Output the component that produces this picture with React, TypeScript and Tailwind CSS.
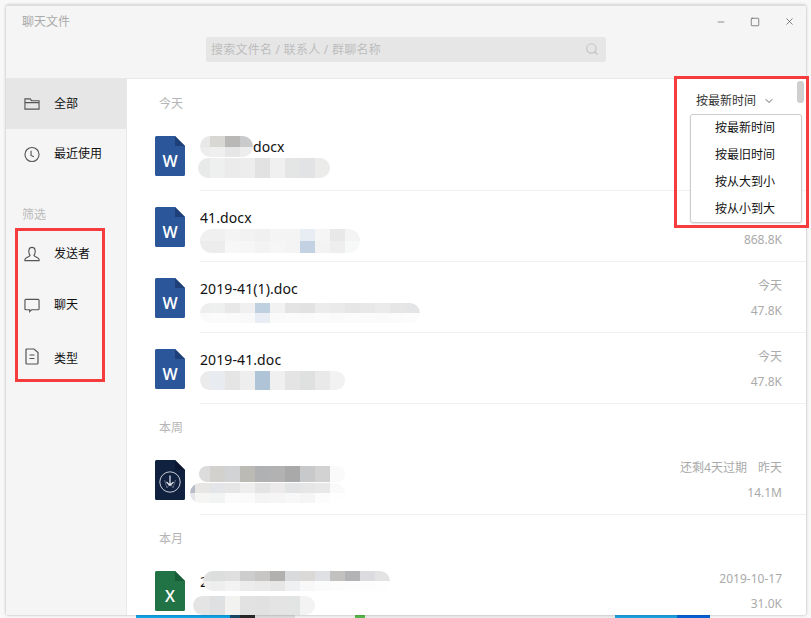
import React from "react";
import { Search, ChevronDown, Minus, Square, X } from "lucide-react";

type Cells = string[][];

// pixelated redaction smear over file names: 15px mosaic, first column is cut by the smear's edge
const Blur = ({ rows, lead, className }: { rows: Cells; lead: number; className: string }) => (
  <div className={`overflow-hidden rounded-full flex flex-col ${className}`}>
    {rows.map((row, i) => (
      <div key={i} className="flex flex-1">
        {row.map((color, j) => (
          <div key={j} className="shrink-0" style={{ backgroundColor: color, width: j === 0 ? lead : 15 }} />
        ))}
      </div>
    ))}
  </div>
);

const DocIcon = ({ body, fold, letter }: { body: string; fold: string; letter: string }) => (
  <svg width="30" height="40" viewBox="0 0 30 40" className="shrink-0 mt-4">
    <path d="M1.5 0H20L30 10V38.5A1.5 1.5 0 0 1 28.5 40H1.5A1.5 1.5 0 0 1 0 38.5V1.5A1.5 1.5 0 0 1 1.5 0Z" fill={body} />
    <path d="M20 0L30 10H20Z" fill={fold} />
    <text x="15" y="31" textAnchor="middle" fontSize="16" fontWeight="600" fill="#fff" fontFamily="Open Sans, sans-serif">
      {letter}
    </text>
  </svg>
);

const DownloadIcon = () => (
  <svg width="30" height="40" viewBox="0 0 30 40" className="shrink-0 mt-4">
    <path d="M1.5 0H20L30 10V38.5A1.5 1.5 0 0 1 28.5 40H1.5A1.5 1.5 0 0 1 0 38.5V1.5A1.5 1.5 0 0 1 1.5 0Z" fill="#10203f" />
    <path d="M20 0L30 10H20Z" fill="#0b1730" />
    <circle cx="15" cy="22" r="10.2" fill="none" stroke="#c8ccd4" strokeWidth="1" />
    <path d="M9.5 20L12 28L15 23L18 28L20.5 20" fill="none" stroke="#5d667c" strokeWidth="1" />
    <path d="M15 15.5V25M11.5 22L15 25.5L18.5 22" fill="none" stroke="#e8eaee" strokeWidth="1.2" />
  </svg>
);

const Row = ({
  icon,
  name,
  sub,
  date,
  size,
}: {
  icon: React.ReactNode;
  name: React.ReactNode;
  sub: React.ReactNode;
  date?: React.ReactNode;
  size?: string;
}) => (
  <div className="flex pl-[28px]">
    {icon}
    <div className="flex-1 ml-[15px] h-[71px] border-b border-[#f0f0f0] flex justify-between">
      <div className="pt-4">
        <div className="h-[22px] flex items-center text-sm tracking-[0.1px] leading-[22px] text-[#111]">{name}</div>
        <div className="h-[22px]">{sub}</div>
      </div>
      <div className="pt-4 pr-[24px] text-right text-xs leading-4 text-[#aaa]">
        <div className="h-4">{date}</div>
        <div className="mt-[9px]">{size}</div>
      </div>
    </div>
  </div>
);

const Section = ({ title }: { title: string }) => (
  <div className="h-10 pt-4 pl-[32px] text-xs leading-4 text-[#b5b5b5]">{title}</div>
);

const wordIcon = <DocIcon body="#2b579a" fold="#1f3f78" letter="W" />;

const SideItem = ({
  icon,
  label,
  active,
  className,
}: {
  icon: React.ReactNode;
  label: string;
  active?: boolean;
  className?: string;
}) => (
  <div className={`h-[50px] flex items-center pl-[18px] text-xs text-[#111] ${active ? "bg-[#e6e6e6]" : ""} ${className ?? ""}`}>
    <span className="w-4 flex justify-center">{icon}</span>
    <span className="ml-[14px]">{label}</span>
  </div>
);

const iconStroke = { fill: "none", stroke: "#555", strokeWidth: 1.2 };

export default function App() {
  return (
    <div className="relative w-[811px] h-[618px] overflow-hidden bg-[#f8f8f8] pt-[5px] px-[6px] font-['Noto_Sans','Noto_Sans_CJK_SC',sans-serif]">
      <div className="relative z-10 w-[800px] h-[610px] overflow-hidden rounded-[2px] bg-white border-t border-[#ddd] shadow-[0_0_3px_rgba(0,0,0,0.3)] flex flex-col">
        <div className="h-[73px] shrink-0 bg-[#f5f5f5] border-b border-[#e8e8e8] flex flex-col">
          <div className="flex justify-between items-center h-[31px]">
            <span className="ml-4 text-xs text-[#aaa]">聊天文件</span>
            <div className="flex items-center gap-[24px] mr-[11px] text-[#444]">
              <Minus size={10} strokeWidth={1.4} />
              <Square size={10} strokeWidth={1.5} />
              <X size={11} strokeWidth={1.4} />
            </div>
          </div>
          <div className="ml-[200px] w-[400px] h-[25px] bg-[#e6e6e6] rounded-[2px] flex items-center justify-between pl-[5px] pr-[7px]">
            <span className="text-xs tracking-[0.25px] text-[#bdbdbd]">搜索文件名 / 联系人 / 群聊名称</span>
            <Search size={14} className="text-[#c4c4c4] -mt-0.5" />
          </div>
        </div>

        <div className="flex-1 flex min-h-0">
          <div className="w-[121px] shrink-0 bg-[#f5f5f5] border-r border-[#e8e8e8]">
            <SideItem
              active
              label="全部"
              icon={
                <svg width="17" height="14" viewBox="0 0 17 14" {...iconStroke}>
                  <path d="M1 12.5V1.5H6.5L8 3.5H16V12.5ZM1 5.5H16" />
                </svg>
              }
            />
            <SideItem
              label="最近使用"
              icon={
                <svg width="17" height="17" viewBox="0 0 17 17" {...iconStroke}>
                  <circle cx="8.5" cy="8.5" r="7.5" />
                  <path d="M7.5 4.5V9.5L10.5 11" />
                </svg>
              }
            />
            <div className="h-[50px] pt-[28px] pl-4 text-xs leading-4 text-[#bbb]">筛选</div>
            <SideItem
              label="发送者"
              icon={
                <svg width="17" height="16" viewBox="0 0 17 16" {...iconStroke}>
                  <path d="M6.5 9.5C5 7.5 5 5.5 5.2 4C5.5 2 7 1 8.5 1S11.5 2 11.8 4C12 5.5 12 7.5 10.5 9.5C11 11 15 11.5 16 13.5V15H1V13.5C2 11.5 6 11 6.5 9.5Z" />
                </svg>
              }
            />
            <SideItem
              label="聊天"
              className="mt-px"
              icon={
                <svg width="17" height="15" viewBox="0 0 17 15" {...iconStroke}>
                  <path d="M2 1H15Q16 1 16 2V11Q16 12 15 12H8L6 14V12H2Q1 12 1 11V2Q1 1 2 1Z" />
                </svg>
              }
            />
            <SideItem
              label="类型"
              className="mt-1"
              icon={
                <svg width="14" height="17" viewBox="0 0 14 17" className="-mt-1.5" {...iconStroke}>
                  <path d="M1.5 1H9L13 4.5V15Q13 16 12 16H2Q1 16 1 15V1.5ZM4.5 7H9.5M4.5 10.5H9.5" />
                </svg>
              }
            />
          </div>

          <div className="flex-1 min-w-0">
            <div className="h-[41px] pt-[17px] pl-[32px] text-xs leading-4 text-[#b5b5b5]">今天</div>
            <Row
              icon={wordIcon}
              name={
                <>
                  <Blur
                    lead={10}
                    className="w-[53px] h-[21px] -mt-px"
                    rows={[["#e8e8e8", "#d8d7d4", "#b9b8b6", "#c9cacc"], ["#ededed", "#efefef", "#e6e6e6", "#ededed"]]}
                  />
                  <span>docx</span>
                </>
              }
              sub={
                <Blur
                  lead={12}
                  className="w-[132px] h-[20px] -ml-0.5"
                  rows={[["#e8e9e9", "#eeefef", "#ebebeb", "#ededed", "#e2e2e2", "#f0f0f0", "#e4e5e5", "#e2e3e5", "#ebebe9"]]}
                />
              }
            />
            <Row
              icon={wordIcon}
              name="41.docx"
              sub={
                <Blur
                  lead={10}
                  className="w-[160px] h-[24px]"
                  rows={[
                    ["#f0f0f0", "#f0f0f0", "#f4f4f4", "#f2f2f2", "#f0f0f0", "#f4f4f4", "#f4f4f4", "#e8edf3", "#f5f5f5", "#e8e8e8", "#f4f4f4"],
                    ["#ececec", "#ececec", "#f7f7f7", "#f6f6f6", "#f3f3f3", "#f6f6f6", "#f4f4f4", "#c2d2e2", "#f3f3f3", "#eeeeee", "#f7f9f9"],
                  ]}
                />
              }
              size="868.8K"
            />
            <Row
              icon={wordIcon}
              name="2019-41(1).doc"
              sub={
                <Blur
                  lead={10}
                  className="w-[220px] h-[20px] mt-[3px]"
                  rows={[
                    ["#eeeeee", "#eef0f0", "#e8e8e8", "#f0f0f0", "#bfd0e1", "#f3f2f2", "#e4e4e4", "#e2e2e2", "#ececec", "#eaeaea", "#e6e6e6", "#e8e8e8", "#ebebeb", "#e6e6e6", "#e4e5e7"],
                    ["#fafafa", "#fbfbfb", "#fafafa", "#f9f9f9", "#e9eef4", "#fafafa", "#fbfbfb", "#fafafa", "#fbfbfb", "#fafafa", "#fbfbfb", "#fbfbfb", "#fafafa", "#fbfbfb", "#fcfcfc"],
                  ]}
                />
              }
              date="今天"
              size="47.8K"
            />
            <Row
              icon={wordIcon}
              name="2019-41.doc"
              sub={
                <Blur
                  lead={10}
                  className="w-[145px] h-[19px]"
                  rows={[["#ebebeb", "#e8ebef", "#e5e5e5", "#eeeeee", "#b0c4d8", "#f0f0f0", "#e4e4e4", "#dfe1e1", "#e9e9e9", "#f2f2f2"]]}
                />
              }
              date="今天"
              size="47.8K"
            />

            <Section title="本周" />
            <Row
              icon={<DownloadIcon />}
              name={
                <Blur
                  lead={11}
                  className="w-[146px] h-4 mt-[5px] -ml-px"
                  rows={[["#dcdcdc", "#d2d1ce", "#d2d3d5", "#bcbab5", "#b0b1b3", "#b2b2b2", "#a9a9a9", "#c8c9cb", "#d2d2d2", "#fafafa"]]}
                />
              }
              sub={
                <Blur
                  lead={5}
                  className="w-[155px] h-5 mt-px -ml-2.5"
                  rows={[
                    ["#b8bcc8", "#e8e6e4", "#e3e5e8", "#e6e6e6", "#eeeeee", "#e4e4e4", "#eceaea", "#e3e4e6", "#e6e6e6", "#e8e8e8", "#fafafa"],
                    ["#e4e6ea", "#f5f5f3", "#f2f4f4", "#fbfbfb", "#fafafa", "#f4f4f4", "#f5f5f5", "#f8f8f8", "#f5f5f5", "#fcfcfc", "#fefefe"],
                  ]}
                />
              }
              date={
                <>
                  还剩4天过期<span className="ml-[11px]">昨天</span>
                </>
              }
              size="14.1M"
            />

            <Section title="本月" />
            <Row
              icon={<DocIcon body="#217346" fold="#185c37" letter="X" />}
              name={
                <>
                  <span>2</span>
                  <Blur
                    lead={7}
                    className="w-[187px] h-5 -mt-[3px] -ml-[5px]"
                    rows={[
                      ["#e0e0e0", "#dcdedd", "#dfdfdf", "#cdcdcd", "#c7c6c4", "#b1b0ae", "#d8dadb", "#dbd9d8", "#dfe0e4", "#c3c1bf", "#b3b3b5", "#dcdce0", "#e3e3e3"],
                      ["#f0f0f0", "#eeeeee", "#f3f3f3", "#ececec", "#ebeaea", "#e6e6e6", "#eef0f2", "#f8f8f8", "#fbfbfb", "#fcfcfc", "#fdfdfd", "#fdfdfd", "#fefefe"],
                    ]}
                  />
                </>
              }
              sub={
                <Blur
                  lead={17}
                  className="w-[122px] h-[19px] mt-[3px] -ml-[7px]"
                  rows={[["#e4e4e4", "#dfe0e2", "#f2f2f0", "#e2e2e2", "#e1e1e1", "#e4e4e4", "#e3e4e4", "#f3f3f3"]]}
                />
              }
              date="2019-10-17"
              size="31.0K"
            />
          </div>
        </div>

        {/* scrollbar thumb */}
        <div className="absolute left-[791px] top-[75px] w-[7px] h-[22px] rounded-[3px] bg-[#cfcfcf]" />

        {/* sort menu */}
        <div className="absolute left-[690px] top-[87px] flex items-center text-xs leading-4 text-[#333]">
          按最新时间
          <ChevronDown size={12} strokeWidth={1.5} className="ml-[7px]" />
        </div>
        <div className="absolute left-[684px] top-[108px] w-[112px] h-[109px] pr-0.5 bg-white border border-[#ccc] rounded-[3px] shadow-[0_1px_2px_rgba(0,0,0,0.12)] flex flex-col justify-center text-xs text-[#111]">
          {["按最新时间", "按最旧时间", "按从大到小", "按从小到大"].map((label) => (
            <div key={label} className="h-[27px] flex items-center justify-center">
              {label}
            </div>
          ))}
        </div>
      </div>

      {/* desktop behind the window */}
      <div className="flex h-[3px] -mx-[6px]">
        <div className="w-[136px]" />
        <div className="w-[94px] bg-[#0ea5e8]" />
        <div className="w-[10px] bg-[#1c4a6a]" />
        <div className="w-[15px] bg-[#2a2a2a]" />
        <div className="w-[40px] bg-[#dddddd]" />
        <div className="w-[60px] bg-[#f4f4f4]" />
        <div className="w-[10px] bg-[#58b84c]" />
        <div className="w-[250px] bg-[#eeeeee]" />
        <div className="w-[62px] bg-[#1ba1e2]" />
        <div className="w-[33px] bg-[#0a62d8]" />
      </div>

      {/* red annotation boxes */}
      <div className="absolute z-20 left-[15px] top-[228px] w-[90px] h-[154px] border-[3px] border-[#f63c3c]" />
      <div className="absolute z-20 left-[674px] top-[76px] w-[135px] h-[152px] border-[3px] border-[#f63c3c]" />
    </div>
  );
}
